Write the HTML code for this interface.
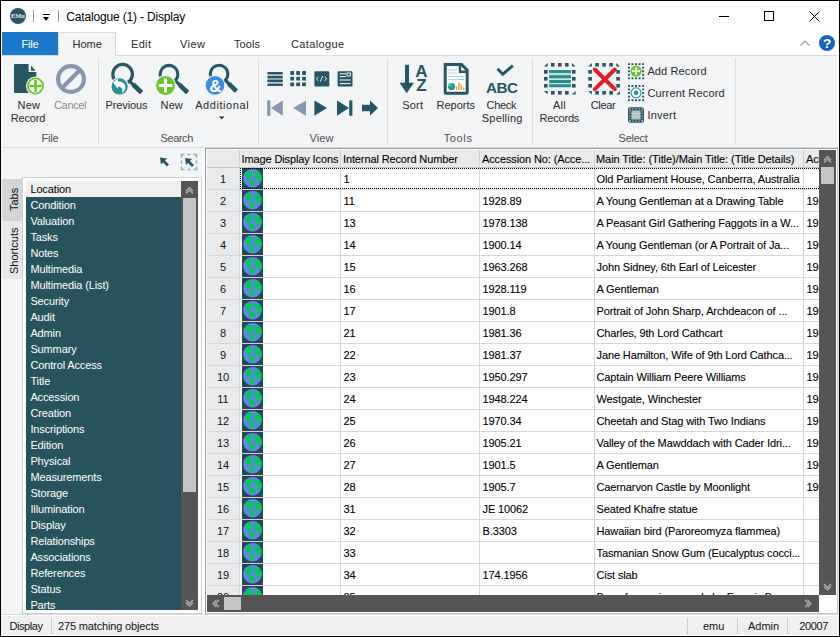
<!DOCTYPE html>
<html><head><meta charset="utf-8">
<style>
*{margin:0;padding:0;box-sizing:border-box}
html,body{width:840px;height:637px;overflow:hidden;background:#fff;font-family:"Liberation Sans",sans-serif;}
.a{position:absolute}
.t{position:absolute;white-space:nowrap;line-height:1}
.globe{width:20px;height:20px;background:#2b5560}
.globe::after{content:"";position:absolute;left:1px;top:1px;width:18px;height:18px;border-radius:50%;background:radial-gradient(circle at 30% 35%,#14c46a 0 22%,transparent 23%),radial-gradient(circle at 70% 30%,#14c46a 0 15%,transparent 16%),radial-gradient(circle at 60% 75%,#14c46a 0 20%,transparent 21%),#5878e6}
</style></head>
<body>
<div class="a" style="left:10px;top:8px;width:16px;height:16px;border-radius:50%;background:#285663"></div>
<svg class="a" style="left:0;top:0" width="30" height="30"><text x="11" y="18.4" textLength="13.8" lengthAdjust="spacingAndGlyphs" font-family="Liberation Serif" font-weight="bold" font-size="7" fill="#e4ecee">EMu</text></svg>
<div class="a" style="left:33px;top:10px;width:1px;height:12px;background:#999"></div>
<div class="a" style="left:43px;top:14px;width:7px;height:1px;background:#000"></div>
<div class="a" style="left:43px;top:17px;width:0;height:0;border-left:3.5px solid transparent;border-right:3.5px solid transparent;border-top:4px solid #000"></div>
<div class="a" style="left:58px;top:10px;width:1px;height:12px;background:#999"></div>
<div class="t" style="left:66.30px;top:11px;font-size:12px;color:#000;letter-spacing:-0.168px;">Catalogue (1) - Display</div>
<div class="a" style="left:719px;top:16px;width:10px;height:1px;background:#000"></div>
<div class="a" style="left:764px;top:11px;width:10px;height:10px;border:1px solid #000"></div>
<svg class="a" style="left:809px;top:11px" width="11" height="11" viewBox="0 0 11 11"><path d="M0.5 0.5L10.5 10.5M10.5 0.5L0.5 10.5" stroke="#000" stroke-width="1"/></svg>
<div class="a" style="left:2px;top:32px;width:56px;height:23px;background:#1b78c9"></div>
<div class="t" style="left:21.60px;top:39px;font-size:11px;color:#fff;letter-spacing:-0.233px;">File</div>
<div class="a" style="left:2px;top:55px;width:836px;height:93px;background:#f3f4f6;border-top:1px solid #dadbdc;border-bottom:1px solid #dadbdc"></div>
<div class="a" style="left:58px;top:32px;width:58px;height:24px;background:#f3f4f6;border:1px solid #dadbdc;border-bottom:none"></div>
<div class="t" style="left:72.50px;top:39px;font-size:11px;color:#2a2a2a;letter-spacing:-0.033px;">Home</div>
<div class="t" style="left:131.00px;top:39px;font-size:11px;color:#2a2a2a;letter-spacing:0.333px;">Edit</div>
<div class="t" style="left:180.00px;top:39px;font-size:11px;color:#2a2a2a;letter-spacing:0.433px;">View</div>
<div class="t" style="left:234.00px;top:39px;font-size:11px;color:#2a2a2a;letter-spacing:0.075px;">Tools</div>
<div class="t" style="left:291.00px;top:39px;font-size:11px;color:#2a2a2a;letter-spacing:0.362px;">Catalogue</div>
<svg class="a" style="left:800px;top:40px" width="10" height="6" viewBox="0 0 10 6"><path d="M0.5 5.5L5 1L9.5 5.5" stroke="#a0a0a0" stroke-width="1.2" fill="none"/></svg>
<div class="a" style="left:819px;top:35px;width:16px;height:16px;border-radius:50%;background:#1565c0"></div>
<svg class="a" style="left:819px;top:35px" width="16" height="16" viewBox="0 0 16 16"><text x="8.2" y="12.8" font-family="Liberation Sans" font-weight="bold" font-size="13.5" fill="#fff" text-anchor="middle">?</text></svg>
<div class="a" style="left:1px;top:148px;width:838px;height:466px;background:#f3f4f6"></div>
<div class="a" style="left:98px;top:58px;width:1px;height:86px;background:#dcdcdc"></div>
<div class="a" style="left:258px;top:58px;width:1px;height:86px;background:#dcdcdc"></div>
<div class="a" style="left:387px;top:58px;width:1px;height:86px;background:#dcdcdc"></div>
<div class="a" style="left:532px;top:58px;width:1px;height:86px;background:#dcdcdc"></div>
<div class="a" style="left:735px;top:58px;width:1px;height:86px;background:#dcdcdc"></div>
<div class="t" style="left:41.40px;top:133px;font-size:11px;color:#505050;letter-spacing:-0.167px;">File</div>
<div class="t" style="left:160.60px;top:133px;font-size:11px;color:#505050;letter-spacing:-0.440px;">Search</div>
<div class="t" style="left:309.40px;top:133px;font-size:11px;color:#505050;letter-spacing:0.167px;">View</div>
<div class="t" style="left:443.70px;top:133px;font-size:11px;color:#505050;letter-spacing:0.650px;">Tools</div>
<div class="t" style="left:618.60px;top:133px;font-size:11px;color:#505050;letter-spacing:-0.280px;">Select</div>
<div class="t" style="left:17.60px;top:100px;font-size:11px;color:#2a2a2a;letter-spacing:0.150px;">New</div>
<div class="t" style="left:10.70px;top:113px;font-size:11px;color:#2a2a2a;letter-spacing:-0.160px;">Record</div>
<div class="t" style="left:54.00px;top:100px;font-size:11px;color:#8c8c8c;letter-spacing:-0.340px;">Cancel</div>
<div class="t" style="left:105.60px;top:100px;font-size:11px;color:#2a2a2a;letter-spacing:-0.114px;">Previous</div>
<div class="t" style="left:160.60px;top:100px;font-size:11px;color:#2a2a2a;letter-spacing:0.100px;">New</div>
<div class="t" style="left:195.20px;top:100px;font-size:11px;color:#2a2a2a;letter-spacing:0.567px;">Additional</div>
<div class="t" style="left:402.30px;top:100px;font-size:11px;color:#2a2a2a;letter-spacing:0.167px;">Sort</div>
<div class="t" style="left:436.50px;top:100px;font-size:11px;color:#2a2a2a;">Reports</div>
<div class="t" style="left:486.50px;top:100px;font-size:11px;color:#2a2a2a;letter-spacing:-0.275px;">Check</div>
<div class="t" style="left:481.80px;top:113px;font-size:11px;color:#2a2a2a;letter-spacing:0.200px;">Spelling</div>
<div class="t" style="left:553.00px;top:100px;font-size:11px;color:#2a2a2a;letter-spacing:0.250px;">All</div>
<div class="t" style="left:539.50px;top:113px;font-size:11px;color:#2a2a2a;letter-spacing:-0.183px;">Records</div>
<div class="t" style="left:590.70px;top:100px;font-size:11px;color:#2a2a2a;letter-spacing:-0.325px;">Clear</div>
<div class="t" style="left:647.40px;top:66px;font-size:11px;color:#2a2a2a;letter-spacing:0.122px;">Add Record</div>
<div class="t" style="left:647.40px;top:88px;font-size:11px;color:#2a2a2a;letter-spacing:0.154px;">Current Record</div>
<div class="t" style="left:647.40px;top:110px;font-size:11px;color:#2a2a2a;letter-spacing:0.220px;">Invert</div>
<svg class="a" style="left:0;top:0" width="840" height="150" viewBox="0 0 840 150">
<path d="M15 64H28.6V72H36.3V92Q36.3 93 35.3 93H15Q14 93 14 92V65Q14 64 15 64Z" fill="#265663"/>
<path d="M31 65.5V70.8H35.6Z" fill="#265663"/>
<circle cx="35.5" cy="86" r="9.6" fill="#f3f4f6"/>
<circle cx="35.5" cy="86" r="7.6" fill="#fff" stroke="#6cc62a" stroke-width="1.8"/>
<path d="M35.5 80V92M29.5 86H41.5" stroke="#6cc62a" stroke-width="2.6"/>
<circle cx="71" cy="79" r="12.9" fill="none" stroke="#8795b0" stroke-width="4.2"/>
<path d="M80.2 69.8L61.8 88.2" stroke="#8795b0" stroke-width="4.2"/>
<circle cx="122.6" cy="74.2" r="9.8" fill="none" stroke="#265663" stroke-width="3.2"/><path d="M128.7 80.3L141.5 92.5" stroke="#265663" stroke-width="3.2"/><path d="M133.2 84.5L141.5 92.5" stroke="#265663" stroke-width="4.6"/>
<circle cx="119.6" cy="86.4" r="9.3" fill="#f3f4f6"/>
<circle cx="119.6" cy="86.4" r="8.1" fill="#2a9196"/>
<path d="M113 82.5L118 78.6V81.2Q124.5 81.5 125.3 86.5Q125.6 91 121.5 93.2Q123.5 89.5 121 87.5Q119.6 86.2 118 86.5V89Z" fill="#fff"/>
<circle cx="169" cy="74.3" r="8.9" fill="none" stroke="#265663" stroke-width="3.1"/><path d="M174.5 79.8L187.5 92.5" stroke="#265663" stroke-width="3.2"/><path d="M179.4 84.6L187.5 92.5" stroke="#265663" stroke-width="4.6"/>
<circle cx="165.5" cy="85.5" r="10.6" fill="#f3f4f6"/>
<circle cx="165.5" cy="85.5" r="9.4" fill="#6cc62a"/>
<path d="M165.5 78.5V92.5M158.5 85.5H172.5" stroke="#fff" stroke-width="3"/>
<circle cx="219.1" cy="74" r="8.8" fill="none" stroke="#265663" stroke-width="3.1"/><path d="M224.6 79.5L236.3 91.2" stroke="#265663" stroke-width="3.2"/><path d="M228.9 83.8L236.3 91.2" stroke="#265663" stroke-width="4.6"/>
<circle cx="215" cy="85.4" r="10.5" fill="#f3f4f6"/>
<circle cx="215" cy="85.4" r="9.3" fill="#3d8ddf"/>
<text x="215.3" y="91.6" font-family="Liberation Sans" font-weight="bold" font-size="17" fill="#fff" text-anchor="middle">&amp;</text>
<path d="M219 116.5H224.5L221.75 119.3Z" fill="#222"/>
<rect x="267.4" y="72.0" width="15.4" height="2.6" rx="0.6" fill="#265663"/>
<rect x="267.4" y="75.8" width="15.4" height="2.6" rx="0.6" fill="#265663"/>
<rect x="267.4" y="79.6" width="15.4" height="2.6" rx="0.6" fill="#265663"/>
<rect x="267.4" y="83.4" width="15.4" height="2.6" rx="0.6" fill="#265663"/>
<rect x="290.3" y="71.1" width="3.8" height="3.8" rx="0.6" fill="#265663"/>
<rect x="290.3" y="76.8" width="3.8" height="3.8" rx="0.6" fill="#265663"/>
<rect x="290.3" y="82.5" width="3.8" height="3.8" rx="0.6" fill="#265663"/>
<rect x="296.2" y="71.1" width="3.8" height="3.8" rx="0.6" fill="#265663"/>
<rect x="296.2" y="76.8" width="3.8" height="3.8" rx="0.6" fill="#265663"/>
<rect x="296.2" y="82.5" width="3.8" height="3.8" rx="0.6" fill="#265663"/>
<rect x="302.1" y="71.1" width="3.8" height="3.8" rx="0.6" fill="#265663"/>
<rect x="302.1" y="76.8" width="3.8" height="3.8" rx="0.6" fill="#265663"/>
<rect x="302.1" y="82.5" width="3.8" height="3.8" rx="0.6" fill="#265663"/>
<rect x="314.4" y="71.2" width="14.9" height="15.2" rx="1.2" fill="#265663"/>
<path d="M318.6 78.8L316.6 77.6M318.6 78.8L316.6 80M324.4 78.8L326.4 77.6M324.4 78.8L326.4 80" stroke="#fff" stroke-width="0"/>
<path d="M318.4 76.9L316.3 78.8L318.4 80.7M324.6 76.9L326.7 78.8L324.6 80.7M322.6 76L320.4 81.6" stroke="#fff" stroke-width="0.9" fill="none"/>
<rect x="337.6" y="71.2" width="14.9" height="15.2" rx="1.2" fill="#265663"/>
<path d="M339.7 73.8H346M339.7 76.6H346M339.7 80H350.5M339.7 83.6H350.5" stroke="#fff" stroke-width="1"/>
<rect x="347" y="73" width="3.4" height="3" fill="none" stroke="#fff" stroke-width="0.9"/>
<rect x="267.2" y="100.4" width="3.2" height="15.4" fill="#8796b3"/><path d="M282.8 100.4V115.8L271 108.1Z" fill="#8796b3"/>
<path d="M306 100.4V115.8L293 108.1Z" fill="#8796b3"/>
<path d="M314.4 100.4V115.8L327 108.1Z" fill="#265663"/>
<path d="M337 100.4V115.8L349 108.1Z" fill="#265663"/><rect x="349.2" y="100.4" width="3.2" height="15.4" fill="#265663"/>
<path d="M362 104.7H370V100.3L378 108L370 115.7V111.3H362Z" fill="#265663"/>
<rect x="405" y="64.8" width="4" height="19" fill="#265663"/><path d="M399.5 82.7H413.9L406.7 93.2Z" fill="#265663"/>
<text x="421.5" y="77" font-family="Liberation Sans" font-weight="bold" font-size="17" fill="#265663" text-anchor="middle">A</text>
<text x="421.5" y="91" font-family="Liberation Sans" font-weight="bold" font-size="17" fill="#265663" text-anchor="middle">Z</text>
<path d="M445.2 64.5H461.5L467.2 70.2V92.2Q467.2 93.2 466.2 93.2H446.2Q445.2 93.2 445.2 92.2Z" fill="#fff" stroke="#265663" stroke-width="3"/>
<path d="M460 64.5V71.7H467.2" fill="none" stroke="#265663" stroke-width="2.4"/>
<path d="M448 70H457M448 73H457M448 76.5H464M448 79.5H464" stroke="#a8cfe8" stroke-width="1.1"/>
<circle cx="451.5" cy="86.6" r="3.6" fill="#2a9196"/><path d="M451.5 86.6V83A3.6 3.6 0 0 0 447.9 86.6Z" fill="#4ad0b0"/>
<path d="M456.6 90V86.5M459 90V82.5M461.4 90V84.5M463.8 90V87.5" stroke="#e8a040" stroke-width="1.5"/>
<path d="M497.5 68.8L502.8 74.2L512.8 65.6" fill="none" stroke="#265663" stroke-width="2.9"/>
<text x="501.8" y="92.6" font-family="Liberation Sans" font-weight="bold" font-size="15.3" fill="#265663" text-anchor="middle" letter-spacing="-0.5">ABC</text>
<path d="M544 66.6L547.6 63V66.6Z" fill="#265663"/><rect x="544" y="70" width="3.6" height="3.6" fill="#265663"/><rect x="544" y="77" width="3.6" height="3.6" fill="#265663"/><rect x="544" y="84" width="3.6" height="3.6" fill="#265663"/><path d="M544 91L547.6 94.6V91Z" fill="#265663"/><rect x="551" y="63" width="3.6" height="3.6" fill="#265663"/><rect x="551" y="91" width="3.6" height="3.6" fill="#265663"/><rect x="558" y="63" width="3.6" height="3.6" fill="#265663"/><rect x="558" y="91" width="3.6" height="3.6" fill="#265663"/><rect x="565" y="63" width="3.6" height="3.6" fill="#265663"/><rect x="565" y="91" width="3.6" height="3.6" fill="#265663"/><path d="M572 63L575.6 66.6H572Z" fill="#265663"/><rect x="572" y="70" width="3.6" height="3.6" fill="#265663"/><rect x="572" y="77" width="3.6" height="3.6" fill="#265663"/><rect x="572" y="84" width="3.6" height="3.6" fill="#265663"/><path d="M572 94.6L575.6 91V94.6Z" fill="#265663"/>
<rect x="549" y="70.3" width="22" height="17" fill="#c9e0e1"/>
<rect x="549" y="70.1" width="22" height="3" rx="1" fill="#2a8d91"/>
<rect x="549" y="75.2" width="22" height="3" rx="1" fill="#2a8d91"/>
<rect x="549" y="80.0" width="22" height="3" rx="1" fill="#2a8d91"/>
<rect x="549" y="84.3" width="22" height="3" rx="1" fill="#2a8d91"/>
<path d="M588.3 66.6L591.9 63V66.6Z" fill="#265663"/><rect x="588.3" y="70" width="3.6" height="3.6" fill="#265663"/><rect x="588.3" y="77" width="3.6" height="3.6" fill="#265663"/><rect x="588.3" y="84" width="3.6" height="3.6" fill="#265663"/><path d="M588.3 91L591.9 94.6V91Z" fill="#265663"/><rect x="595.3" y="63" width="3.6" height="3.6" fill="#265663"/><rect x="595.3" y="91" width="3.6" height="3.6" fill="#265663"/><rect x="602.3" y="63" width="3.6" height="3.6" fill="#265663"/><rect x="602.3" y="91" width="3.6" height="3.6" fill="#265663"/><rect x="609.3" y="63" width="3.6" height="3.6" fill="#265663"/><rect x="609.3" y="91" width="3.6" height="3.6" fill="#265663"/><path d="M616.3 63L619.9 66.6H616.3Z" fill="#265663"/><rect x="616.3" y="70" width="3.6" height="3.6" fill="#265663"/><rect x="616.3" y="77" width="3.6" height="3.6" fill="#265663"/><rect x="616.3" y="84" width="3.6" height="3.6" fill="#265663"/><path d="M616.3 94.6L619.9 91V94.6Z" fill="#265663"/>
<path d="M594.8 69.5L614.8 89.2M614.8 69.5L594.8 89.2" stroke="#e61e2a" stroke-width="4" stroke-linecap="round"/>
<rect x="628.0" y="63.2" width="1.9" height="1.9" fill="#265663"/><rect x="628.0" y="66.8" width="1.9" height="1.9" fill="#265663"/><rect x="628.0" y="70.3" width="1.9" height="1.9" fill="#265663"/><rect x="628.0" y="73.9" width="1.9" height="1.9" fill="#265663"/><rect x="628.0" y="77.4" width="1.9" height="1.9" fill="#265663"/><rect x="631.5" y="63.2" width="1.9" height="1.9" fill="#265663"/><rect x="631.5" y="77.4" width="1.9" height="1.9" fill="#265663"/><rect x="635.1" y="63.2" width="1.9" height="1.9" fill="#265663"/><rect x="635.1" y="77.4" width="1.9" height="1.9" fill="#265663"/><rect x="638.6" y="63.2" width="1.9" height="1.9" fill="#265663"/><rect x="638.6" y="77.4" width="1.9" height="1.9" fill="#265663"/><rect x="642.2" y="63.2" width="1.9" height="1.9" fill="#265663"/><rect x="642.2" y="66.8" width="1.9" height="1.9" fill="#265663"/><rect x="642.2" y="70.3" width="1.9" height="1.9" fill="#265663"/><rect x="642.2" y="73.9" width="1.9" height="1.9" fill="#265663"/><rect x="642.2" y="77.4" width="1.9" height="1.9" fill="#265663"/>
<circle cx="636.1" cy="71.2" r="5.6" fill="#6cc62a"/><path d="M636.1 67.3V75.1M632.2 71.2H640" stroke="#fff" stroke-width="1.7"/>
<rect x="628.0" y="85.0" width="1.9" height="1.9" fill="#265663"/><rect x="628.0" y="88.5" width="1.9" height="1.9" fill="#265663"/><rect x="628.0" y="92.1" width="1.9" height="1.9" fill="#265663"/><rect x="628.0" y="95.7" width="1.9" height="1.9" fill="#265663"/><rect x="628.0" y="99.2" width="1.9" height="1.9" fill="#265663"/><rect x="631.5" y="85.0" width="1.9" height="1.9" fill="#265663"/><rect x="631.5" y="99.2" width="1.9" height="1.9" fill="#265663"/><rect x="635.1" y="85.0" width="1.9" height="1.9" fill="#265663"/><rect x="635.1" y="99.2" width="1.9" height="1.9" fill="#265663"/><rect x="638.6" y="85.0" width="1.9" height="1.9" fill="#265663"/><rect x="638.6" y="99.2" width="1.9" height="1.9" fill="#265663"/><rect x="642.2" y="85.0" width="1.9" height="1.9" fill="#265663"/><rect x="642.2" y="88.5" width="1.9" height="1.9" fill="#265663"/><rect x="642.2" y="92.1" width="1.9" height="1.9" fill="#265663"/><rect x="642.2" y="95.7" width="1.9" height="1.9" fill="#265663"/><rect x="642.2" y="99.2" width="1.9" height="1.9" fill="#265663"/>
<circle cx="636.1" cy="92.8" r="5" fill="none" stroke="#2a9196" stroke-width="1.1"/><circle cx="636.1" cy="92.8" r="2.3" fill="#2a9196"/>
<rect x="628" y="107.2" width="16" height="15.5" rx="2" fill="#2a5560"/>
<rect x="631.5" y="110.5" width="9" height="9" fill="#b4c2c6"/><path d="M631.5 113.5H640.5M631.5 116.5H640.5" stroke="#c6d2d5" stroke-width="0.8"/>
<rect x="629.2" y="108.3" width="1.6" height="1.3" fill="#9fb2b8"/><rect x="629.2" y="120.5" width="1.6" height="1.3" fill="#9fb2b8"/>
<rect x="629.1" y="110.0" width="1.3" height="1.4" fill="#9fb2b8"/><rect x="641.6" y="110.0" width="1.3" height="1.4" fill="#9fb2b8"/>
<rect x="632.3" y="108.3" width="1.6" height="1.3" fill="#9fb2b8"/><rect x="632.3" y="120.5" width="1.6" height="1.3" fill="#9fb2b8"/>
<rect x="629.1" y="112.5" width="1.3" height="1.4" fill="#9fb2b8"/><rect x="641.6" y="112.5" width="1.3" height="1.4" fill="#9fb2b8"/>
<rect x="635.4" y="108.3" width="1.6" height="1.3" fill="#9fb2b8"/><rect x="635.4" y="120.5" width="1.6" height="1.3" fill="#9fb2b8"/>
<rect x="629.1" y="115.0" width="1.3" height="1.4" fill="#9fb2b8"/><rect x="641.6" y="115.0" width="1.3" height="1.4" fill="#9fb2b8"/>
<rect x="638.5" y="108.3" width="1.6" height="1.3" fill="#9fb2b8"/><rect x="638.5" y="120.5" width="1.6" height="1.3" fill="#9fb2b8"/>
<rect x="629.1" y="117.5" width="1.3" height="1.4" fill="#9fb2b8"/><rect x="641.6" y="117.5" width="1.3" height="1.4" fill="#9fb2b8"/>
<rect x="641.6" y="108.3" width="1.6" height="1.3" fill="#9fb2b8"/><rect x="641.6" y="120.5" width="1.6" height="1.3" fill="#9fb2b8"/>
<rect x="629.1" y="120.0" width="1.3" height="1.4" fill="#9fb2b8"/><rect x="641.6" y="120.0" width="1.3" height="1.4" fill="#9fb2b8"/>
</svg>
<div class="a" style="left:162px;top:157px;width:10px;height:10px"></div>
<svg class="a" style="left:158px;top:152px" width="42" height="22" viewBox="158 152 42 22"><path d="M160 157.5L167 158.5L165 160.5L169 164.5L167 166.5L163 162.5L161 164.5Z" fill="#265663"/><path d="M185 158L192 159L190 161L194 165L192 167L188 163L186 165Z" fill="#265663"/><path d="M181.5 157.5V154.5H184.5M187.5 154.5H190.5M193.5 154.5H196.5V157.5M196.5 160.5V163.5M196.5 166.5V169.5H193.5M190.5 169.5H187.5M184.5 169.5H181.5V166.5M181.5 163.5V160.5" stroke="#7fb8bb" stroke-width="1.6" fill="none"/></svg>
<div class="a" style="left:2px;top:179px;width:20px;height:42px;background:#d4d4d4"></div>
<div class="a" style="left:2px;top:221px;width:20px;height:58px;background:#e8e8e8"></div>
<div class="t" style="left:9px;top:211px;font-size:11px;color:#111;transform:rotate(-90deg);transform-origin:0 0">Tabs</div>
<div class="t" style="left:9px;top:274px;font-size:11px;color:#111;transform:rotate(-90deg);transform-origin:0 0">Shortcuts</div>
<div class="a" style="left:22px;top:177px;width:180px;height:437px;background:#fff;border:1px solid #d0d0d0"></div>
<div class="a" style="left:26px;top:181px;width:155px;height:16px;background:#efefef"></div>
<div class="a" style="left:26px;top:197px;width:155px;height:413px;background:#27535f"></div>
<div class="a" style="left:0;top:0;width:181px;height:610px;overflow:hidden">
<div class="t" style="left:30.40px;top:184px;font-size:11px;color:#000;letter-spacing:-0.13px">Location</div>
<div class="t" style="left:30.40px;top:200px;font-size:11px;color:#fff;letter-spacing:-0.13px">Condition</div>
<div class="t" style="left:30.40px;top:216px;font-size:11px;color:#fff;letter-spacing:-0.13px">Valuation</div>
<div class="t" style="left:30.40px;top:232px;font-size:11px;color:#fff;letter-spacing:-0.13px">Tasks</div>
<div class="t" style="left:30.40px;top:248px;font-size:11px;color:#fff;letter-spacing:-0.13px">Notes</div>
<div class="t" style="left:30.40px;top:264px;font-size:11px;color:#fff;letter-spacing:-0.13px">Multimedia</div>
<div class="t" style="left:30.40px;top:280px;font-size:11px;color:#fff;letter-spacing:-0.13px">Multimedia (List)</div>
<div class="t" style="left:30.40px;top:296px;font-size:11px;color:#fff;letter-spacing:-0.13px">Security</div>
<div class="t" style="left:30.40px;top:312px;font-size:11px;color:#fff;letter-spacing:-0.13px">Audit</div>
<div class="t" style="left:30.40px;top:328px;font-size:11px;color:#fff;letter-spacing:-0.13px">Admin</div>
<div class="t" style="left:30.40px;top:344px;font-size:11px;color:#fff;letter-spacing:-0.13px">Summary</div>
<div class="t" style="left:30.40px;top:360px;font-size:11px;color:#fff;letter-spacing:-0.13px">Control Access</div>
<div class="t" style="left:30.40px;top:376px;font-size:11px;color:#fff;letter-spacing:-0.13px">Title</div>
<div class="t" style="left:30.40px;top:392px;font-size:11px;color:#fff;letter-spacing:-0.13px">Accession</div>
<div class="t" style="left:30.40px;top:408px;font-size:11px;color:#fff;letter-spacing:-0.13px">Creation</div>
<div class="t" style="left:30.40px;top:424px;font-size:11px;color:#fff;letter-spacing:-0.13px">Inscriptions</div>
<div class="t" style="left:30.40px;top:440px;font-size:11px;color:#fff;letter-spacing:-0.13px">Edition</div>
<div class="t" style="left:30.40px;top:456px;font-size:11px;color:#fff;letter-spacing:-0.13px">Physical</div>
<div class="t" style="left:30.40px;top:472px;font-size:11px;color:#fff;letter-spacing:-0.13px">Measurements</div>
<div class="t" style="left:30.40px;top:488px;font-size:11px;color:#fff;letter-spacing:-0.13px">Storage</div>
<div class="t" style="left:30.40px;top:504px;font-size:11px;color:#fff;letter-spacing:-0.13px">Illumination</div>
<div class="t" style="left:30.40px;top:520px;font-size:11px;color:#fff;letter-spacing:-0.13px">Display</div>
<div class="t" style="left:30.40px;top:536px;font-size:11px;color:#fff;letter-spacing:-0.13px">Relationships</div>
<div class="t" style="left:30.40px;top:552px;font-size:11px;color:#fff;letter-spacing:-0.13px">Associations</div>
<div class="t" style="left:30.40px;top:568px;font-size:11px;color:#fff;letter-spacing:-0.13px">References</div>
<div class="t" style="left:30.40px;top:584px;font-size:11px;color:#fff;letter-spacing:-0.13px">Status</div>
<div class="t" style="left:30.40px;top:600px;font-size:11px;color:#fff;letter-spacing:-0.13px">Parts</div>
</div>
<div class="a" style="left:181px;top:181px;width:17px;height:429px;background:#555"></div>
<div class="a" style="left:183px;top:198px;width:13px;height:294px;background:#c4c4c4"></div>
<div class="a" style="left:202px;top:148px;width:3px;height:466px;background:#fff"></div>
<div class="a" style="left:205px;top:148px;width:633px;height:466px;background:#fff;border:1px solid #999;border-right-color:#c4c4c4;border-bottom-color:#c4c4c4"></div>
<div class="a" style="left:0;top:0;width:819px;height:595px;overflow:hidden">
<div class="a" style="left:207px;top:150px;width:612px;height:18px;background:#e9eaec;border-bottom:1px solid #c4c4c4"></div>
<div class="a" style="left:207px;top:168px;width:32px;height:427px;background:#e9eaec"></div>
<div class="a" style="left:239px;top:150px;width:1px;height:17px;background:#d0d0d0"></div>
<div class="t" style="left:241.50px;top:154px;font-size:11px;color:#000;letter-spacing:-0.12px;-webkit-text-stroke:0.1px currentColor">Image Display Icons</div>
<div class="a" style="left:340px;top:150px;width:1px;height:17px;background:#d0d0d0"></div>
<div class="t" style="left:343.00px;top:154px;font-size:11px;color:#000;letter-spacing:-0.12px;-webkit-text-stroke:0.1px currentColor">Internal Record Number</div>
<div class="a" style="left:479px;top:150px;width:1px;height:17px;background:#d0d0d0"></div>
<div class="t" style="left:482.00px;top:154px;font-size:11px;color:#000;letter-spacing:-0.12px;-webkit-text-stroke:0.1px currentColor">Accession No: (Acce...</div>
<div class="a" style="left:594px;top:150px;width:1px;height:17px;background:#d0d0d0"></div>
<div class="t" style="left:596.00px;top:154px;font-size:11px;color:#000;letter-spacing:-0.065px;-webkit-text-stroke:0.1px currentColor">Main Title: (Title)/Main Title: (Title Details)</div>
<div class="a" style="left:803px;top:150px;width:1px;height:17px;background:#d0d0d0"></div>
<div class="t" style="left:806.00px;top:154px;font-size:11px;color:#000;letter-spacing:-0.12px;-webkit-text-stroke:0.1px currentColor">Accession</div>
<div class="a" style="left:207px;top:189px;width:612px;height:1px;background:#d6d6d6"></div>
<div class="t" style="left:207px;width:32px;text-align:center;top:174px;font-size:11px;color:#111">1</div>
<svg class="a" style="left:242px;top:168px" width="21" height="21"><use href="#globe"/></svg>
<div class="t" style="left:343.50px;top:174px;font-size:11px;color:#000;letter-spacing:-0.12px;-webkit-text-stroke:0.1px currentColor">1</div>
<div class="t" style="left:596.50px;top:174px;font-size:11px;color:#000;letter-spacing:-0.12px;-webkit-text-stroke:0.1px currentColor">Old Parliament House, Canberra, Australia</div>
<div class="a" style="left:207px;top:211px;width:612px;height:1px;background:#d6d6d6"></div>
<div class="t" style="left:207px;width:32px;text-align:center;top:196px;font-size:11px;color:#111">2</div>
<svg class="a" style="left:242px;top:190px" width="21" height="21"><use href="#globe"/></svg>
<div class="t" style="left:343.50px;top:196px;font-size:11px;color:#000;letter-spacing:-0.12px;-webkit-text-stroke:0.1px currentColor">11</div>
<div class="t" style="left:482.50px;top:196px;font-size:11px;color:#000;letter-spacing:-0.12px;-webkit-text-stroke:0.1px currentColor">1928.89</div>
<div class="t" style="left:596.50px;top:196px;font-size:11px;color:#000;letter-spacing:-0.12px;-webkit-text-stroke:0.1px currentColor">A Young Gentleman at a Drawing Table</div>
<div class="t" style="left:806.50px;top:196px;font-size:11px;color:#000;letter-spacing:-0.12px;-webkit-text-stroke:0.1px currentColor">1928</div>
<div class="a" style="left:207px;top:233px;width:612px;height:1px;background:#d6d6d6"></div>
<div class="t" style="left:207px;width:32px;text-align:center;top:218px;font-size:11px;color:#111">3</div>
<svg class="a" style="left:242px;top:212px" width="21" height="21"><use href="#globe"/></svg>
<div class="t" style="left:343.50px;top:218px;font-size:11px;color:#000;letter-spacing:-0.12px;-webkit-text-stroke:0.1px currentColor">13</div>
<div class="t" style="left:482.50px;top:218px;font-size:11px;color:#000;letter-spacing:-0.12px;-webkit-text-stroke:0.1px currentColor">1978.138</div>
<div class="t" style="left:596.50px;top:218px;font-size:11px;color:#000;letter-spacing:-0.12px;-webkit-text-stroke:0.1px currentColor">A Peasant Girl Gathering Faggots in a W...</div>
<div class="t" style="left:806.50px;top:218px;font-size:11px;color:#000;letter-spacing:-0.12px;-webkit-text-stroke:0.1px currentColor">1978</div>
<div class="a" style="left:207px;top:255px;width:612px;height:1px;background:#d6d6d6"></div>
<div class="t" style="left:207px;width:32px;text-align:center;top:240px;font-size:11px;color:#111">4</div>
<svg class="a" style="left:242px;top:234px" width="21" height="21"><use href="#globe"/></svg>
<div class="t" style="left:343.50px;top:240px;font-size:11px;color:#000;letter-spacing:-0.12px;-webkit-text-stroke:0.1px currentColor">14</div>
<div class="t" style="left:482.50px;top:240px;font-size:11px;color:#000;letter-spacing:-0.12px;-webkit-text-stroke:0.1px currentColor">1900.14</div>
<div class="t" style="left:596.50px;top:240px;font-size:11px;color:#000;letter-spacing:-0.12px;-webkit-text-stroke:0.1px currentColor">A Young Gentleman (or A Portrait of Ja...</div>
<div class="t" style="left:806.50px;top:240px;font-size:11px;color:#000;letter-spacing:-0.12px;-webkit-text-stroke:0.1px currentColor">1900</div>
<div class="a" style="left:207px;top:277px;width:612px;height:1px;background:#d6d6d6"></div>
<div class="t" style="left:207px;width:32px;text-align:center;top:262px;font-size:11px;color:#111">5</div>
<svg class="a" style="left:242px;top:256px" width="21" height="21"><use href="#globe"/></svg>
<div class="t" style="left:343.50px;top:262px;font-size:11px;color:#000;letter-spacing:-0.12px;-webkit-text-stroke:0.1px currentColor">15</div>
<div class="t" style="left:482.50px;top:262px;font-size:11px;color:#000;letter-spacing:-0.12px;-webkit-text-stroke:0.1px currentColor">1963.268</div>
<div class="t" style="left:596.50px;top:262px;font-size:11px;color:#000;letter-spacing:-0.12px;-webkit-text-stroke:0.1px currentColor">John Sidney, 6th Earl of Leicester</div>
<div class="t" style="left:806.50px;top:262px;font-size:11px;color:#000;letter-spacing:-0.12px;-webkit-text-stroke:0.1px currentColor">1963</div>
<div class="a" style="left:207px;top:299px;width:612px;height:1px;background:#d6d6d6"></div>
<div class="t" style="left:207px;width:32px;text-align:center;top:284px;font-size:11px;color:#111">6</div>
<svg class="a" style="left:242px;top:278px" width="21" height="21"><use href="#globe"/></svg>
<div class="t" style="left:343.50px;top:284px;font-size:11px;color:#000;letter-spacing:-0.12px;-webkit-text-stroke:0.1px currentColor">16</div>
<div class="t" style="left:482.50px;top:284px;font-size:11px;color:#000;letter-spacing:-0.12px;-webkit-text-stroke:0.1px currentColor">1928.119</div>
<div class="t" style="left:596.50px;top:284px;font-size:11px;color:#000;letter-spacing:-0.12px;-webkit-text-stroke:0.1px currentColor">A Gentleman</div>
<div class="t" style="left:806.50px;top:284px;font-size:11px;color:#000;letter-spacing:-0.12px;-webkit-text-stroke:0.1px currentColor">1928</div>
<div class="a" style="left:207px;top:321px;width:612px;height:1px;background:#d6d6d6"></div>
<div class="t" style="left:207px;width:32px;text-align:center;top:306px;font-size:11px;color:#111">7</div>
<svg class="a" style="left:242px;top:300px" width="21" height="21"><use href="#globe"/></svg>
<div class="t" style="left:343.50px;top:306px;font-size:11px;color:#000;letter-spacing:-0.12px;-webkit-text-stroke:0.1px currentColor">17</div>
<div class="t" style="left:482.50px;top:306px;font-size:11px;color:#000;letter-spacing:-0.12px;-webkit-text-stroke:0.1px currentColor">1901.8</div>
<div class="t" style="left:596.50px;top:306px;font-size:11px;color:#000;letter-spacing:-0.12px;-webkit-text-stroke:0.1px currentColor">Portrait of John Sharp, Archdeacon of ...</div>
<div class="t" style="left:806.50px;top:306px;font-size:11px;color:#000;letter-spacing:-0.12px;-webkit-text-stroke:0.1px currentColor">1901</div>
<div class="a" style="left:207px;top:343px;width:612px;height:1px;background:#d6d6d6"></div>
<div class="t" style="left:207px;width:32px;text-align:center;top:328px;font-size:11px;color:#111">8</div>
<svg class="a" style="left:242px;top:322px" width="21" height="21"><use href="#globe"/></svg>
<div class="t" style="left:343.50px;top:328px;font-size:11px;color:#000;letter-spacing:-0.12px;-webkit-text-stroke:0.1px currentColor">21</div>
<div class="t" style="left:482.50px;top:328px;font-size:11px;color:#000;letter-spacing:-0.12px;-webkit-text-stroke:0.1px currentColor">1981.36</div>
<div class="t" style="left:596.50px;top:328px;font-size:11px;color:#000;letter-spacing:-0.12px;-webkit-text-stroke:0.1px currentColor">Charles, 9th Lord Cathcart</div>
<div class="t" style="left:806.50px;top:328px;font-size:11px;color:#000;letter-spacing:-0.12px;-webkit-text-stroke:0.1px currentColor">1981</div>
<div class="a" style="left:207px;top:365px;width:612px;height:1px;background:#d6d6d6"></div>
<div class="t" style="left:207px;width:32px;text-align:center;top:350px;font-size:11px;color:#111">9</div>
<svg class="a" style="left:242px;top:344px" width="21" height="21"><use href="#globe"/></svg>
<div class="t" style="left:343.50px;top:350px;font-size:11px;color:#000;letter-spacing:-0.12px;-webkit-text-stroke:0.1px currentColor">22</div>
<div class="t" style="left:482.50px;top:350px;font-size:11px;color:#000;letter-spacing:-0.12px;-webkit-text-stroke:0.1px currentColor">1981.37</div>
<div class="t" style="left:596.50px;top:350px;font-size:11px;color:#000;letter-spacing:-0.12px;-webkit-text-stroke:0.1px currentColor">Jane Hamilton, Wife of 9th Lord Cathca...</div>
<div class="t" style="left:806.50px;top:350px;font-size:11px;color:#000;letter-spacing:-0.12px;-webkit-text-stroke:0.1px currentColor">1981</div>
<div class="a" style="left:207px;top:387px;width:612px;height:1px;background:#d6d6d6"></div>
<div class="t" style="left:207px;width:32px;text-align:center;top:372px;font-size:11px;color:#111">10</div>
<svg class="a" style="left:242px;top:366px" width="21" height="21"><use href="#globe"/></svg>
<div class="t" style="left:343.50px;top:372px;font-size:11px;color:#000;letter-spacing:-0.12px;-webkit-text-stroke:0.1px currentColor">23</div>
<div class="t" style="left:482.50px;top:372px;font-size:11px;color:#000;letter-spacing:-0.12px;-webkit-text-stroke:0.1px currentColor">1950.297</div>
<div class="t" style="left:596.50px;top:372px;font-size:11px;color:#000;letter-spacing:-0.12px;-webkit-text-stroke:0.1px currentColor">Captain William Peere Williams</div>
<div class="t" style="left:806.50px;top:372px;font-size:11px;color:#000;letter-spacing:-0.12px;-webkit-text-stroke:0.1px currentColor">1950</div>
<div class="a" style="left:207px;top:409px;width:612px;height:1px;background:#d6d6d6"></div>
<div class="t" style="left:207px;width:32px;text-align:center;top:394px;font-size:11px;color:#111">11</div>
<svg class="a" style="left:242px;top:388px" width="21" height="21"><use href="#globe"/></svg>
<div class="t" style="left:343.50px;top:394px;font-size:11px;color:#000;letter-spacing:-0.12px;-webkit-text-stroke:0.1px currentColor">24</div>
<div class="t" style="left:482.50px;top:394px;font-size:11px;color:#000;letter-spacing:-0.12px;-webkit-text-stroke:0.1px currentColor">1948.224</div>
<div class="t" style="left:596.50px;top:394px;font-size:11px;color:#000;letter-spacing:-0.12px;-webkit-text-stroke:0.1px currentColor">Westgate, Winchester</div>
<div class="t" style="left:806.50px;top:394px;font-size:11px;color:#000;letter-spacing:-0.12px;-webkit-text-stroke:0.1px currentColor">1948</div>
<div class="a" style="left:207px;top:431px;width:612px;height:1px;background:#d6d6d6"></div>
<div class="t" style="left:207px;width:32px;text-align:center;top:416px;font-size:11px;color:#111">12</div>
<svg class="a" style="left:242px;top:410px" width="21" height="21"><use href="#globe"/></svg>
<div class="t" style="left:343.50px;top:416px;font-size:11px;color:#000;letter-spacing:-0.12px;-webkit-text-stroke:0.1px currentColor">25</div>
<div class="t" style="left:482.50px;top:416px;font-size:11px;color:#000;letter-spacing:-0.12px;-webkit-text-stroke:0.1px currentColor">1970.34</div>
<div class="t" style="left:596.50px;top:416px;font-size:11px;color:#000;letter-spacing:-0.12px;-webkit-text-stroke:0.1px currentColor">Cheetah and Stag with Two Indians</div>
<div class="t" style="left:806.50px;top:416px;font-size:11px;color:#000;letter-spacing:-0.12px;-webkit-text-stroke:0.1px currentColor">1970</div>
<div class="a" style="left:207px;top:453px;width:612px;height:1px;background:#d6d6d6"></div>
<div class="t" style="left:207px;width:32px;text-align:center;top:438px;font-size:11px;color:#111">13</div>
<svg class="a" style="left:242px;top:432px" width="21" height="21"><use href="#globe"/></svg>
<div class="t" style="left:343.50px;top:438px;font-size:11px;color:#000;letter-spacing:-0.12px;-webkit-text-stroke:0.1px currentColor">26</div>
<div class="t" style="left:482.50px;top:438px;font-size:11px;color:#000;letter-spacing:-0.12px;-webkit-text-stroke:0.1px currentColor">1905.21</div>
<div class="t" style="left:596.50px;top:438px;font-size:11px;color:#000;letter-spacing:-0.12px;-webkit-text-stroke:0.1px currentColor">Valley of the Mawddach with Cader Idri...</div>
<div class="t" style="left:806.50px;top:438px;font-size:11px;color:#000;letter-spacing:-0.12px;-webkit-text-stroke:0.1px currentColor">1905</div>
<div class="a" style="left:207px;top:475px;width:612px;height:1px;background:#d6d6d6"></div>
<div class="t" style="left:207px;width:32px;text-align:center;top:460px;font-size:11px;color:#111">14</div>
<svg class="a" style="left:242px;top:454px" width="21" height="21"><use href="#globe"/></svg>
<div class="t" style="left:343.50px;top:460px;font-size:11px;color:#000;letter-spacing:-0.12px;-webkit-text-stroke:0.1px currentColor">27</div>
<div class="t" style="left:482.50px;top:460px;font-size:11px;color:#000;letter-spacing:-0.12px;-webkit-text-stroke:0.1px currentColor">1901.5</div>
<div class="t" style="left:596.50px;top:460px;font-size:11px;color:#000;letter-spacing:-0.12px;-webkit-text-stroke:0.1px currentColor">A Gentleman</div>
<div class="t" style="left:806.50px;top:460px;font-size:11px;color:#000;letter-spacing:-0.12px;-webkit-text-stroke:0.1px currentColor">1901</div>
<div class="a" style="left:207px;top:497px;width:612px;height:1px;background:#d6d6d6"></div>
<div class="t" style="left:207px;width:32px;text-align:center;top:482px;font-size:11px;color:#111">15</div>
<svg class="a" style="left:242px;top:476px" width="21" height="21"><use href="#globe"/></svg>
<div class="t" style="left:343.50px;top:482px;font-size:11px;color:#000;letter-spacing:-0.12px;-webkit-text-stroke:0.1px currentColor">28</div>
<div class="t" style="left:482.50px;top:482px;font-size:11px;color:#000;letter-spacing:-0.12px;-webkit-text-stroke:0.1px currentColor">1905.7</div>
<div class="t" style="left:596.50px;top:482px;font-size:11px;color:#000;letter-spacing:-0.12px;-webkit-text-stroke:0.1px currentColor">Caernarvon Castle by Moonlight</div>
<div class="t" style="left:806.50px;top:482px;font-size:11px;color:#000;letter-spacing:-0.12px;-webkit-text-stroke:0.1px currentColor">1905</div>
<div class="a" style="left:207px;top:519px;width:612px;height:1px;background:#d6d6d6"></div>
<div class="t" style="left:207px;width:32px;text-align:center;top:504px;font-size:11px;color:#111">16</div>
<svg class="a" style="left:242px;top:498px" width="21" height="21"><use href="#globe"/></svg>
<div class="t" style="left:343.50px;top:504px;font-size:11px;color:#000;letter-spacing:-0.12px;-webkit-text-stroke:0.1px currentColor">31</div>
<div class="t" style="left:482.50px;top:504px;font-size:11px;color:#000;letter-spacing:-0.12px;-webkit-text-stroke:0.1px currentColor">JE 10062</div>
<div class="t" style="left:596.50px;top:504px;font-size:11px;color:#000;letter-spacing:-0.12px;-webkit-text-stroke:0.1px currentColor">Seated Khafre statue</div>
<div class="a" style="left:207px;top:541px;width:612px;height:1px;background:#d6d6d6"></div>
<div class="t" style="left:207px;width:32px;text-align:center;top:526px;font-size:11px;color:#111">17</div>
<svg class="a" style="left:242px;top:520px" width="21" height="21"><use href="#globe"/></svg>
<div class="t" style="left:343.50px;top:526px;font-size:11px;color:#000;letter-spacing:-0.12px;-webkit-text-stroke:0.1px currentColor">32</div>
<div class="t" style="left:482.50px;top:526px;font-size:11px;color:#000;letter-spacing:-0.12px;-webkit-text-stroke:0.1px currentColor">B.3303</div>
<div class="t" style="left:596.50px;top:526px;font-size:11px;color:#000;letter-spacing:-0.12px;-webkit-text-stroke:0.1px currentColor">Hawaiian bird (Paroreomyza flammea)</div>
<div class="a" style="left:207px;top:563px;width:612px;height:1px;background:#d6d6d6"></div>
<div class="t" style="left:207px;width:32px;text-align:center;top:548px;font-size:11px;color:#111">18</div>
<svg class="a" style="left:242px;top:542px" width="21" height="21"><use href="#globe"/></svg>
<div class="t" style="left:343.50px;top:548px;font-size:11px;color:#000;letter-spacing:-0.12px;-webkit-text-stroke:0.1px currentColor">33</div>
<div class="t" style="left:596.50px;top:548px;font-size:11px;color:#000;letter-spacing:-0.12px;-webkit-text-stroke:0.1px currentColor">Tasmanian Snow Gum (Eucalyptus cocci...</div>
<div class="a" style="left:207px;top:585px;width:612px;height:1px;background:#d6d6d6"></div>
<div class="t" style="left:207px;width:32px;text-align:center;top:570px;font-size:11px;color:#111">19</div>
<svg class="a" style="left:242px;top:564px" width="21" height="21"><use href="#globe"/></svg>
<div class="t" style="left:343.50px;top:570px;font-size:11px;color:#000;letter-spacing:-0.12px;-webkit-text-stroke:0.1px currentColor">34</div>
<div class="t" style="left:482.50px;top:570px;font-size:11px;color:#000;letter-spacing:-0.12px;-webkit-text-stroke:0.1px currentColor">174.1956</div>
<div class="t" style="left:596.50px;top:570px;font-size:11px;color:#000;letter-spacing:-0.12px;-webkit-text-stroke:0.1px currentColor">Cist slab</div>
<div class="a" style="left:207px;top:607px;width:612px;height:1px;background:#d6d6d6"></div>
<div class="t" style="left:207px;width:32px;text-align:center;top:592px;font-size:11px;color:#111">20</div>
<svg class="a" style="left:242px;top:586px" width="21" height="21"><use href="#globe"/></svg>
<div class="t" style="left:343.50px;top:592px;font-size:11px;color:#000;letter-spacing:-0.12px;-webkit-text-stroke:0.1px currentColor">35</div>
<div class="t" style="left:596.50px;top:592px;font-size:11px;color:#000;letter-spacing:-0.12px;-webkit-text-stroke:0.1px currentColor">Bag of sawn iron, made by Francis B...</div>
<div class="a" style="left:239px;top:168px;width:1px;height:427px;background:#d6d6d6"></div>
<div class="a" style="left:340px;top:168px;width:1px;height:427px;background:#d6d6d6"></div>
<div class="a" style="left:479px;top:168px;width:1px;height:427px;background:#d6d6d6"></div>
<div class="a" style="left:594px;top:168px;width:1px;height:427px;background:#d6d6d6"></div>
<div class="a" style="left:803px;top:168px;width:1px;height:427px;background:#d6d6d6"></div>
<div class="a" style="left:240px;top:168px;width:579px;height:21px;border:1px dotted #000;border-right:none"></div>
</div>
<div class="a" style="left:819px;top:150px;width:17px;height:445px;background:#555"></div>
<div class="a" style="left:821px;top:167px;width:13px;height:17px;background:#c4c4c4"></div>
<div class="a" style="left:207px;top:595px;width:612px;height:17px;background:#555"></div>
<div class="a" style="left:224px;top:597px;width:17px;height:13px;background:#c4c4c4"></div>
<svg class="a" style="left:0;top:0" width="840" height="637" viewBox="0 0 840 637"><path d="M186 191L189.5 187.5L193 191M186 193.5L189.5 190L193 193.5" stroke="#b4b4b4" stroke-width="1.2" fill="none"/><path d="M186 600L189.5 603.5L193 600M186 602.5L189.5 606L193 602.5" stroke="#b4b4b4" stroke-width="1.2" fill="none"/><path d="M824 160L827.5 156.5L831 160M824 162.5L827.5 159L831 162.5" stroke="#b4b4b4" stroke-width="1.2" fill="none"/><path d="M824 584L827.5 587.5L831 584M824 586.5L827.5 590L831 586.5" stroke="#b4b4b4" stroke-width="1.2" fill="none"/><path d="M216.5 600L213 603.5L216.5 607M219 600L215.5 603.5L219 607" stroke="#b4b4b4" stroke-width="1.2" fill="none"/><path d="M805 600L808.5 603.5L805 607M807.5 600L811 603.5L807.5 607" stroke="#b4b4b4" stroke-width="1.2" fill="none"/></svg>
<svg width="0" height="0" style="position:absolute"><defs><symbol id="globe" viewBox="0 0 21 21"><rect width="21" height="21" fill="#224a55"/><circle cx="10.5" cy="10.2" r="9.3" fill="#6a80ee"/><path d="M4 5Q6 2.5 9.5 3.2L10.8 6L9.2 9L6.5 11L3.5 10Q2.6 7 4 5Z" fill="#00cc55"/><path d="M12.5 3.6Q16 2.8 18.2 5Q20 8 19.6 11L18.6 14.8L17 15.2L16.5 11.5L13 10.2L12.6 7Z" fill="#00cc55"/><path d="M7 12.2L11 11.6L12.6 13L12.2 17L10.2 18.6L8 16.2L6.5 13.6Z" fill="#00cc55"/></symbol></defs></svg>
<div class="a" style="left:1px;top:614px;width:838px;height:22px;background:#fff;border-top:1px solid #dadada"></div>
<div class="a" style="left:1px;top:616px;width:838px;height:19px;background:#f0f0f0"></div>
<div class="t" style="left:9.50px;top:621px;font-size:11px;color:#111;letter-spacing:-0.433px;">Display</div>
<div class="a" style="left:51px;top:618px;width:1px;height:16px;background:#ccc"></div>
<div class="t" style="left:58.00px;top:621px;font-size:11px;color:#111;letter-spacing:-0.153px;">275 matching objects</div>
<div class="a" style="left:687px;top:618px;width:1px;height:16px;background:#ccc"></div>
<div class="a" style="left:737px;top:618px;width:1px;height:16px;background:#ccc"></div>
<div class="a" style="left:787px;top:618px;width:1px;height:16px;background:#ccc"></div>
<div class="t" style="left:703.00px;top:621px;font-size:11px;color:#111;">emu</div>
<div class="t" style="left:748.00px;top:621px;font-size:11px;color:#111;">Admin</div>
<div class="t" style="left:799.20px;top:621px;font-size:11px;color:#111;letter-spacing:-0.325px;">20007</div>
<div class="a" style="left:0;top:0;width:840px;height:637px;border:1px solid #000"></div>
</body></html>
